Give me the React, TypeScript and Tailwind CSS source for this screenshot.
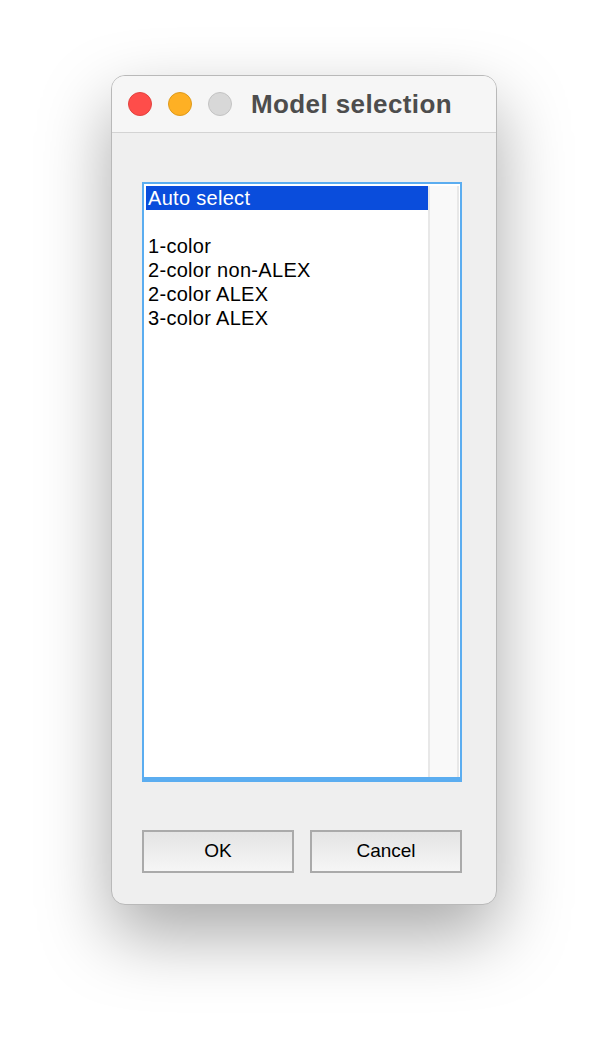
import React from 'react'

const items = ['Auto select', '', '1-color', '2-color non-ALEX', '2-color ALEX', '3-color ALEX']

function TrafficLight({ fill, stroke }: { fill: string; stroke: string }) {
  return (
    <svg width="24" height="24" viewBox="0 0 24 24">
      <circle cx="12" cy="12" r="11.5" fill={fill} stroke={stroke} strokeWidth="1" />
    </svg>
  )
}

export default function App() {
  const selected = 0

  return (
    <div
      className="w-[608px] h-[1052px] bg-white pt-[75px] pl-[111px]"
      style={{ fontFamily: '"Liberation Sans", Arial, sans-serif' }}
    >
      <div className="w-[386px] h-[830px] rounded-[14px] border border-[#b9b9b9] bg-[#efefef] overflow-hidden shadow-[0_30px_70px_rgba(0,0,0,0.34)] flex flex-col">
        {/* title bar */}
        <div className="h-[57px] bg-[#f6f6f6] border-b border-[#d3d3d3] flex items-center pl-[16px] shrink-0">
          <div className="flex items-center gap-[16px]">
            <TrafficLight fill="#fe4d4a" stroke="#e2433f" />
            <TrafficLight fill="#feb024" stroke="#de9a1b" />
            <TrafficLight fill="#d8d8d8" stroke="#c3c3c3" />
          </div>
          <div className="ml-[19px] text-[26px] leading-none font-bold text-[#4d4d4d] tracking-[0.4px]">
            Model selection
          </div>
        </div>

        {/* body */}
        <div className="flex flex-col pl-[30px] pt-[49px]">
          <div className="w-[320px] h-[600px] border-2 border-b-[5px] border-[#5badf0] bg-white pl-[2px] pt-[2px] pr-[1px] flex">
            <div className="flex-1 flex flex-col">
              {items.map((it, i) => (
                <div
                  key={i}
                  className={
                    'h-[24px] pl-[2px] text-[20px] leading-[25px] tracking-[0.3px] whitespace-pre ' +
                    (i === selected ? 'bg-[#0a4ddc] text-white' : 'text-black')
                  }
                >
                  {it || ' '}
                </div>
              ))}
            </div>
            <div className="w-[31px] bg-[#f9f9f9] border-l-2 border-r-2 border-[#e8e8e8]" />
          </div>

          <div className="flex gap-[16px] mt-[48px]">
            <button className="w-[152px] h-[43px] border-2 border-[#aaaaaa] bg-gradient-to-b from-[#e4e4e4] to-[#f6f6f6] text-[19px] text-black">
              OK
            </button>
            <button className="w-[152px] h-[43px] border-2 border-[#aaaaaa] bg-gradient-to-b from-[#e4e4e4] to-[#f6f6f6] text-[19px] text-black">
              Cancel
            </button>
          </div>
        </div>
      </div>
    </div>
  )
}
